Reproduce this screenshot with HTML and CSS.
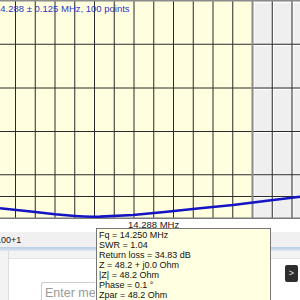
FILE: index.html
```html
<!DOCTYPE html>
<html>
<head>
<meta charset="utf-8">
<link rel="stylesheet" href="styles.css">
</head>
<body>
<div class="app">
  <div class="chart">
    <svg class="plot" width="300" height="219" viewBox="0 0 300 219">
      <rect x="0" y="0" width="252" height="219" fill="#ffffe0"/>
      <rect x="252" y="0" width="48" height="219" fill="#efefef"/>
      <g stroke="#ffffff" stroke-width="1">
        <line x1="254" y1="0" x2="254" y2="219"/>
        <line x1="273.5" y1="0" x2="273.5" y2="219"/>
        <line x1="293" y1="0" x2="293" y2="219"/>
        <line x1="252" y1="2.5" x2="300" y2="2.5"/>
        <line x1="252" y1="45.5" x2="300" y2="45.5"/>
        <line x1="252" y1="89.5" x2="300" y2="89.5"/>
        <line x1="252" y1="132.5" x2="300" y2="132.5"/>
        <line x1="252" y1="175.5" x2="300" y2="175.5"/>
        <line x1="252" y1="197.5" x2="300" y2="197.5"/>
      </g>
      <g stroke="#2a2a2a" stroke-width="1">
        <line x1="15.5" y1="0" x2="15.5" y2="219"/>
        <line x1="35.25" y1="0" x2="35.25" y2="219"/>
        <line x1="55" y1="0" x2="55" y2="219"/>
        <line x1="74.75" y1="0" x2="74.75" y2="219"/>
        <line x1="94.5" y1="0" x2="94.5" y2="219"/>
        <line x1="114.25" y1="0" x2="114.25" y2="219"/>
        <line x1="134" y1="0" x2="134" y2="219"/>
        <line x1="153.75" y1="0" x2="153.75" y2="219"/>
        <line x1="173.5" y1="0" x2="173.5" y2="219"/>
        <line x1="193.25" y1="0" x2="193.25" y2="219"/>
        <line x1="213" y1="0" x2="213" y2="219"/>
        <line x1="232.75" y1="0" x2="232.75" y2="219"/>
        <line x1="272.25" y1="0" x2="272.25" y2="219"/>
        <line x1="292" y1="0" x2="292" y2="219"/>
        <line x1="0" y1="44.25" x2="300" y2="44.25"/>
        <line x1="0" y1="88" x2="300" y2="88"/>
        <line x1="0" y1="131.5" x2="300" y2="131.5"/>
        <line x1="0" y1="174.75" x2="300" y2="174.75"/>
        <line x1="0" y1="196.5" x2="300" y2="196.5"/>
      </g>
      <line x1="252.5" y1="0" x2="252.5" y2="219" stroke="#8a8a8a" stroke-width="2"/>
      <rect x="0" y="0" width="300" height="1.5" fill="#8c8c8c"/>
      <line x1="0" y1="218.25" x2="300" y2="218.25" stroke="#7a7a7a" stroke-width="1.5"/>
      <path d="M0 208.3 L33 211.7 L55 214.3 L75 216 C83 216.6 92 216.8 100 216.6 L133 215 L167 211.7 L200 208.3 L233 205 L267 200.7 L300 196.7" fill="none" stroke="#1414c4" stroke-width="2.6" stroke-linejoin="round"/>
    </svg>
    <div class="range">14.288 ± 0.125 MHz, 100 points</div>
  </div>
  <div class="axis-label">14.288 MHz</div>
  <div class="status">100+1</div>
  <div class="divider"></div>
  <div class="chat">
    <div class="chat-side"></div>
    <div class="chat-main">
      <div class="chat-head"></div>
      <div class="send-row"><span class="send-btn">&gt;</span></div>
      <div class="input-row"><div class="msg-input">Enter mes</div></div>
    </div>
  </div>
  <div class="tooltip">
    <div>Fq = 14.250 MHz</div>
    <div>SWR = 1.04</div>
    <div>Return loss = 34.83 dB</div>
    <div>Z = 48.2 + j0.0 Ohm</div>
    <div>|Z| = 48.2 Ohm</div>
    <div>Phase = 0.1 °</div>
    <div>Zpar = 48.2 Ohm</div>
  </div>
</div>
</body>
</html>
```
FILE: styles.css
```css
* { box-sizing: border-box; }
html, body { margin: 0; padding: 0; }
body {
  width: 300px;
  height: 300px;
  overflow: hidden;
  font-family: "Liberation Sans", Arial, sans-serif;
  background: #ffffff;
}
.app {
  position: relative;
  width: 300px;
  height: 300px;
  overflow: hidden;
  display: flex;
  flex-direction: column;
}
.chart {
  position: relative;
  height: 219px;
  flex: none;
}
.plot { display: block; }
.range {
  position: absolute;
  left: -5px;
  top: 3px;
  font-size: 9.5px;
  line-height: 12px;
  color: #3434c8;
  white-space: nowrap;
}
.axis-label {
  height: 13px;
  flex: none;
  padding-left: 128px;
  font-size: 9.5px;
  line-height: 12px;
  color: #1a1a1a;
}
.status {
  height: 15px;
  flex: none;
  background: #f0f0f0;
  font-size: 9px;
  line-height: 14px;
  padding-top: 1px;
  color: #1a1a1a;
  margin-left: -4px;
}
.divider {
  height: 4px;
  flex: none;
  background: linear-gradient(#b9cde3, #dce6f0);
}
.chat {
  flex: 1;
  display: flex;
  background: #f0f0f0;
}
.chat-side {
  width: 9px;
  flex: none;
  background: #f3f3f3;
  border-right: 1px solid #dcdcdc;
}
.chat-main {
  flex: 1;
  display: flex;
  flex-direction: column;
  background: #ffffff;
}
.chat-head {
  height: 8px;
  background: #f4f4f4;
  border-bottom: 1px solid #e2e2e2;
}
.send-row {
  display: flex;
  justify-content: flex-end;
  padding-top: 6px;
  padding-right: 2px;
}
.send-btn {
  width: 13px;
  height: 17px;
  background: #2e2e2e;
  border-radius: 2px;
  color: #e8e8e8;
  font-size: 9px;
  line-height: 17px;
  text-align: center;
}
.input-row {
  padding-left: 32px;
}
.msg-input {
  width: 54px;
  height: 24px;
  border: 1px solid #cfcfcf;
  border-right: none;
  border-radius: 3px 0 0 3px;
  font-size: 12.5px;
  line-height: 20px;
  padding-left: 3px;
  color: #9a9a9a;
  white-space: nowrap;
  overflow: hidden;
}
.tooltip {
  position: absolute;
  left: 96px;
  top: 228px;
  width: 175px;
  height: 90px;
  background: #ffffe1;
  border: 1px solid #767676;
  padding: 1px 2px;
  font-size: 9px;
  line-height: 10px;
  color: #111111;
}
```
